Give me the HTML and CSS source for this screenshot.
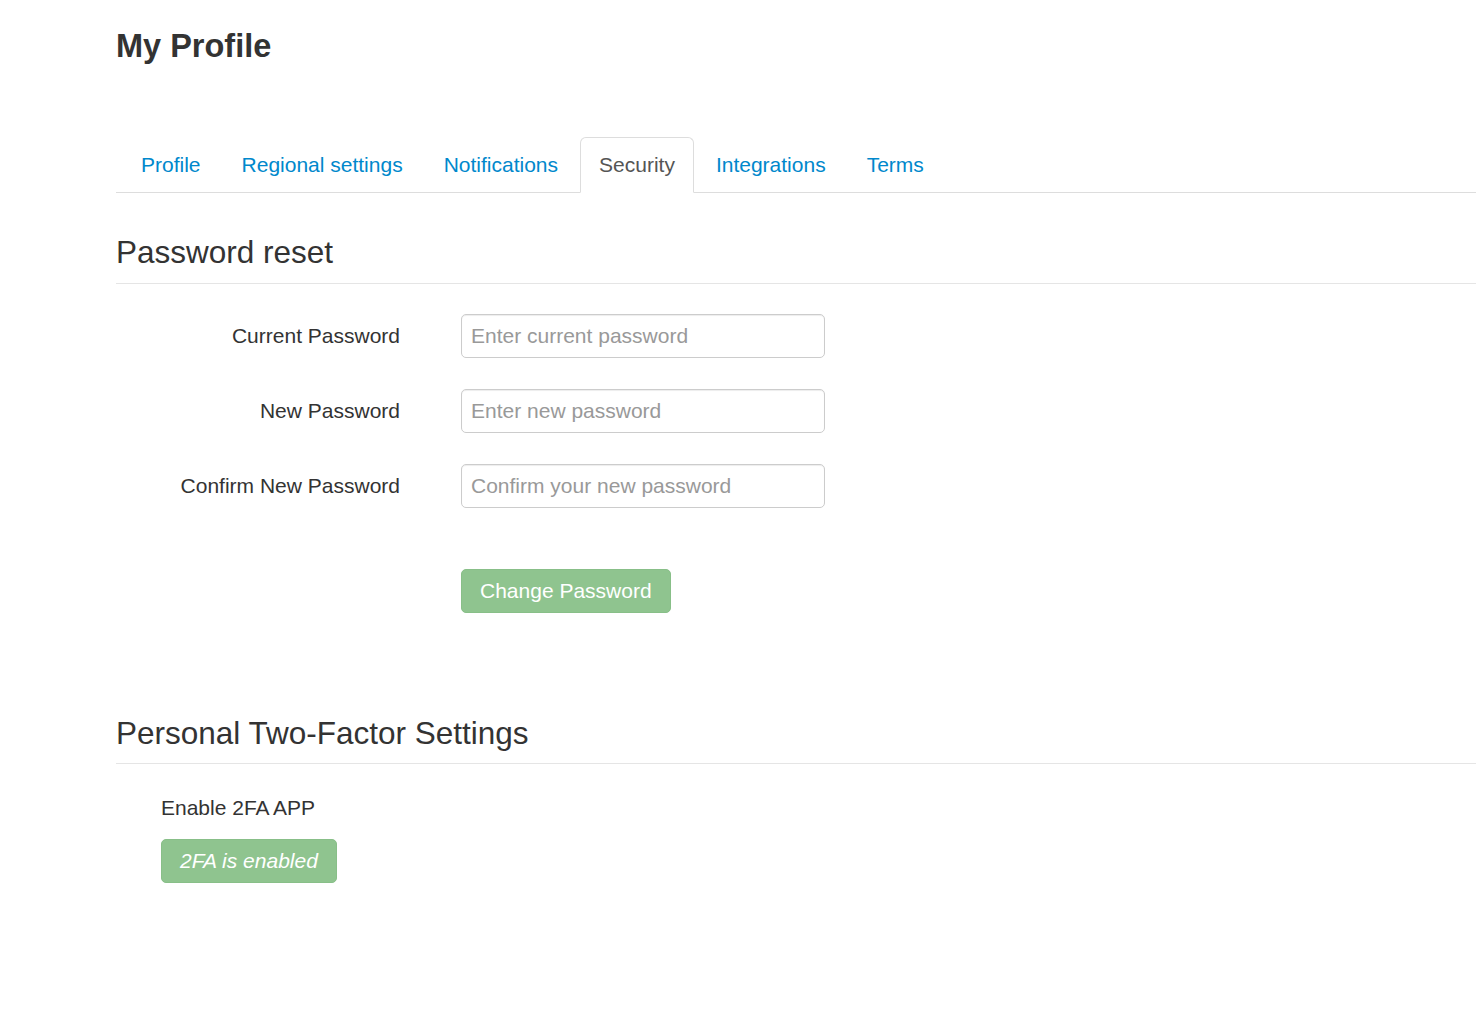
FILE: index.html
```html
<!DOCTYPE html>
<html lang="en">
<head>
<meta charset="utf-8">
<title>My Profile</title>
<link rel="stylesheet" href="styles.css">
</head>
<body>
<div class="container">
  <h1 class="title">My Profile</h1>
  <ul class="tabs">
    <li class="tab"><a href="#">Profile</a></li>
    <li class="tab"><a href="#">Regional settings</a></li>
    <li class="tab"><a href="#">Notifications</a></li>
    <li class="tab active"><a href="#">Security</a></li>
    <li class="tab"><a href="#">Integrations</a></li>
    <li class="tab"><a href="#">Terms</a></li>
  </ul>

  <section class="section first">
    <h3 class="page-header">Password reset</h3>
    <form class="form-grid">
      <label class="control-label" for="cur">Current Password</label>
      <input class="form-control" id="cur" type="password" placeholder="Enter current password">
      <label class="control-label" for="new">New Password</label>
      <input class="form-control" id="new" type="password" placeholder="Enter new password">
      <label class="control-label" for="conf">Confirm New Password</label>
      <input class="form-control" id="conf" type="password" placeholder="Confirm your new password">
      <div class="btn-cell">
        <button class="btn btn-success" type="button" disabled>Change Password</button>
      </div>
    </form>
  </section>

  <section class="section second">
    <h3 class="page-header">Personal Two-Factor Settings</h3>
    <div class="tfa">
      <div class="tfa-label">Enable 2FA APP</div>
      <button class="btn btn-success btn-italic" type="button" disabled>2FA is enabled</button>
    </div>
  </section>
</div>
</body>
</html>
```

FILE: styles.css
```css
* { box-sizing: border-box; }

html, body {
  margin: 0;
  padding: 0;
  background: #fff;
}

body {
  font-family: "Liberation Sans", Arial, Helvetica, sans-serif;
  font-size: 21px;
  line-height: 30px;
  color: #333;
  overflow-x: hidden;
}

.container {
  padding-left: 116px;
}

.title {
  margin: 28px 0 0;
  font-size: 32.5px;
  line-height: 36px;
  font-weight: bold;
  color: #333;
}

.tabs {
  list-style: none;
  margin: 73px 0 0;
  padding: 0 0 0 6px;
  display: flex;
  border-bottom: 1px solid #ddd;
}

.tab {
  margin-right: 3px;
  margin-bottom: -1px;
}

.tab a {
  display: block;
  padding: 12px 18px;
  border: 1px solid transparent;
  border-radius: 6px 6px 0 0;
  color: #0088cc;
  text-decoration: none;
  line-height: 30px;
}

.tab.active a {
  color: #555;
  background: #fff;
  border-color: #ddd #ddd transparent;
}

.page-header {
  margin: 0;
  font-size: 31.5px;
  line-height: 34px;
  font-weight: normal;
  color: #333;
  padding-bottom: 13.5px;
  border-bottom: 1px solid #e5e5e5;
}

.section.first { margin-top: 42px; }
.section.second { margin-top: 103px; }

.form-grid {
  margin-top: 30px;
  display: grid;
  grid-template-columns: 284px 364px;
  column-gap: 61px;
  row-gap: 31px;
  align-items: center;
}

.control-label {
  text-align: right;
  font-weight: normal;
}

.form-control {
  height: 44px;
  width: 364px;
  padding: 6px 9px;
  font-family: inherit;
  font-size: 21px;
  color: #555;
  border: 1px solid #ccc;
  border-radius: 5px;
  box-shadow: inset 0 1px 1px rgba(0,0,0,.075);
  background: #fff;
}

.form-control::placeholder { color: #999; }

.btn-cell {
  grid-column: 2;
  margin-top: 30px;
}

.btn {
  height: 44px;
  padding: 0 18px;
  font-family: inherit;
  font-size: 21px;
  line-height: 30px;
  border-radius: 5px;
  border: 1px solid transparent;
}

.btn-success {
  color: #fff;
  background: #8fc48f;
  border-color: #88bf88;
}

.btn-italic {
  font-style: italic;
  width: 176px;
}

.tfa {
  margin-top: 29px;
  padding-left: 45px;
}

.tfa-label {
  margin-bottom: 16px;
}
```
